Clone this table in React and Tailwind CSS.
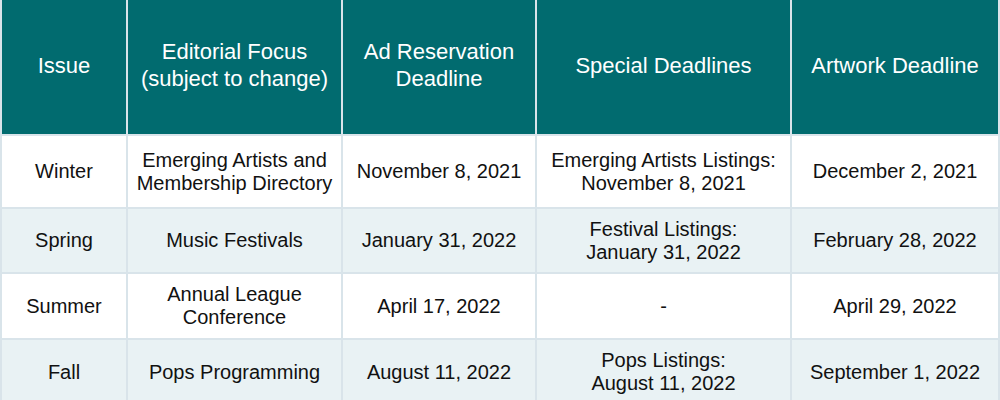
const headers = [
  ["Issue"],
  ["Editorial Focus", "(subject to change)"],
  ["Ad Reservation", "Deadline"],
  ["Special Deadlines"],
  ["Artwork Deadline"],
];

const rows = [
  [["Winter"], ["Emerging Artists and", "Membership Directory"], ["November 8, 2021"], ["Emerging Artists Listings:", "November 8, 2021"], ["December 2, 2021"]],
  [["Spring"], ["Music Festivals"], ["January 31, 2022"], ["Festival Listings:", "January 31, 2022"], ["February 28, 2022"]],
  [["Summer"], ["Annual League", "Conference"], ["April 17, 2022"], ["-"], ["April 29, 2022"]],
  [["Fall"], ["Pops Programming"], ["August 11, 2022"], ["Pops Listings:", "August 11, 2022"], ["September 1, 2022"]],
];

function Lines({ lines }) {
  return lines.map((l, i) => (
    <span key={i} className="block">
      {l}
    </span>
  ));
}

export default function App() {
  return (
    <div
      className="w-[1000px] h-[400px] overflow-hidden bg-white"
      style={{ fontFamily: '"Liberation Sans", Arial, sans-serif' }}
    >
      <div className="grid grid-cols-[124px_213px_192px_253px_206px] grid-rows-[134px_71px_63px_64px_64px] gap-[2px] px-[2px] pb-[2px] bg-[#d9e4ea]">
        {headers.map((h, i) => (
          <div
            key={i}
            className="flex items-center justify-center text-center bg-[#016b6f] text-white text-[22px] leading-[27px] pb-[4px]"
          >
            <div>
              <Lines lines={h} />
            </div>
          </div>
        ))}
        {rows.map((r, ri) =>
          r.map((c, ci) => (
            <div
              key={ri + "-" + ci}
              className={`flex items-center justify-center text-center text-[20px] leading-[23px] text-[#111] ${
                ri % 2 === 1 ? "bg-[#e9f2f4]" : "bg-white"
              }`}
            >
              <div>
                <Lines lines={c} />
              </div>
            </div>
          ))
        )}
      </div>
    </div>
  );
}
